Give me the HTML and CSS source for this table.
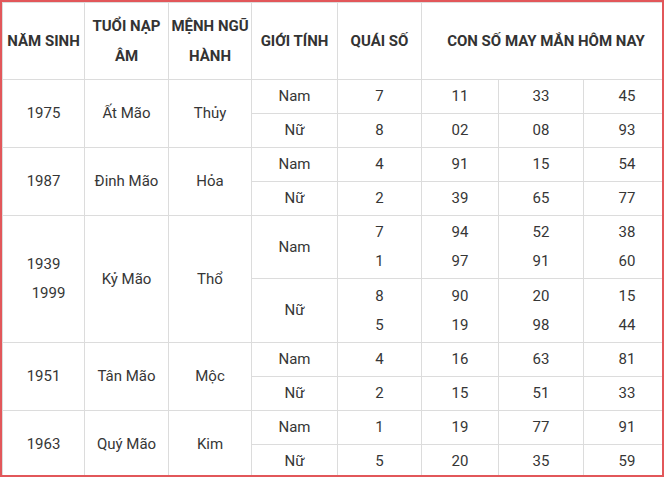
FILE: index.html
```html
<!DOCTYPE html>
<html lang="vi">
<head>
<meta charset="utf-8">
<link rel="stylesheet" href="styles.css">
</head>
<body>
<div class="frame">
<table class="lucky">
<colgroup>
<col class="c1"><col class="c2"><col class="c3"><col class="c4"><col class="c5"><col class="c6"><col class="c7"><col class="c8">
</colgroup>
<thead>
<tr class="head">
<th>NĂM SINH</th>
<th>TUỔI NẠP ÂM</th>
<th>MỆNH NGŨ HÀNH</th>
<th>GIỚI TÍNH</th>
<th>QUÁI SỐ</th>
<th colspan="3">CON SỐ MAY MẮN HÔM NAY</th>
</tr>
</thead>
<tbody>
<tr><td rowspan="2">1975</td><td rowspan="2">Ất Mão</td><td rowspan="2">Thủy</td><td>Nam</td><td>7</td><td>11</td><td>33</td><td>45</td></tr>
<tr><td>Nữ</td><td>8</td><td>02</td><td>08</td><td>93</td></tr>
<tr><td rowspan="2">1987</td><td rowspan="2">Đinh Mão</td><td rowspan="2">Hỏa</td><td>Nam</td><td>4</td><td>91</td><td>15</td><td>54</td></tr>
<tr><td>Nữ</td><td>2</td><td>39</td><td>65</td><td>77</td></tr>
<tr class="tall"><td rowspan="2">1939<br><span class="shift">1999</span></td><td rowspan="2">Kỷ Mão</td><td rowspan="2">Thổ</td><td>Nam</td><td>7<br>1</td><td>94<br>97</td><td>52<br>91</td><td>38<br>60</td></tr>
<tr class="tall2"><td>Nữ</td><td>8<br>5</td><td>90<br>19</td><td>20<br>98</td><td>15<br>44</td></tr>
<tr><td rowspan="2">1951</td><td rowspan="2">Tân Mão</td><td rowspan="2">Mộc</td><td>Nam</td><td>4</td><td>16</td><td>63</td><td>81</td></tr>
<tr><td>Nữ</td><td>2</td><td>15</td><td>51</td><td>33</td></tr>
<tr><td rowspan="2">1963</td><td rowspan="2">Quý Mão</td><td rowspan="2">Kim</td><td>Nam</td><td>1</td><td>19</td><td>77</td><td>91</td></tr>
<tr><td>Nữ</td><td>5</td><td>20</td><td>35</td><td>59</td></tr>
</tbody>
</table>
</div>
</body>
</html>
```
FILE: styles.css
```css
html, body {
  margin: 0;
  padding: 0;
  background: #fff;
}
.frame {
  box-sizing: border-box;
  width: 664px;
  height: 477px;
  border: 2px solid #e2575a;
  overflow: hidden;
}
.lucky {
  border-collapse: collapse;
  table-layout: fixed;
  width: 668px;
  font-family: Roboto, "Noto Sans", sans-serif;
  font-size: 15px;
  color: #363636;
}
.c1 { width: 82px; }
.c2 { width: 84px; }
.c3 { width: 83px; }
.c4 { width: 86px; }
.c5 { width: 84px; }
.c6 { width: 77px; }
.c7 { width: 85px; }
.c8 { width: 87px; }
.lucky th, .lucky td {
  border: 1px solid #dcdcdc;
  text-align: center;
  vertical-align: middle;
  padding: 0;
  line-height: 29px;
}
.lucky th {
  font-weight: 700;
  color: #333;
  line-height: 30px;
}
.head { height: 77px; }
.lucky tbody tr { height: 34px; }
.lucky tbody tr.tall { height: 63px; }
.lucky tbody tr.tall2 { height: 64px; }
.shift { padding-left: 10px; }
```
